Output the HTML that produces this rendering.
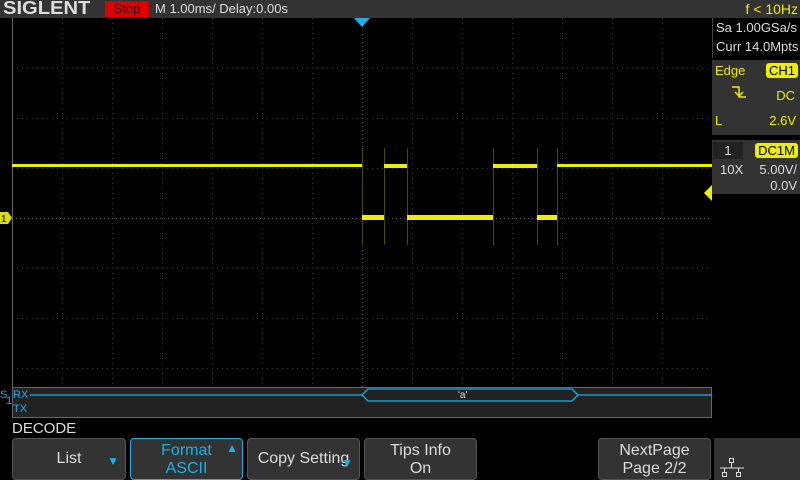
<!DOCTYPE html><html><head><style>
html,body{margin:0;width:800px;height:480px;background:#000;overflow:hidden}
body{font-family:"Liberation Sans",sans-serif;position:relative}
.a{position:absolute}
.btn{position:absolute;top:438px;height:42px;background:#333;border:1px solid #555;border-radius:4px;box-sizing:border-box;color:#ddd;font-size:16px;text-align:center;line-height:18px}
</style></head><body>
<div class="a" style="left:0;top:0;width:800px;height:18px;background:#333"></div>
<div class="a" style="left:3px;top:-2px;color:#ddd;font-weight:bold;font-size:18px;font-family:'Liberation Sans';transform:scaleX(1.12);transform-origin:left">SIGLENT</div>
<div class="a" style="left:105px;top:1px;width:44px;height:16px;background:#d00;color:#300;font-size:13px;text-align:center;line-height:16px">Stop</div>
<div class="a" style="left:155px;top:1px;color:#ddd;font-size:13px;line-height:16px">M 1.00ms/ Delay:0.00s</div>
<div class="a" style="right:2px;top:0;color:#ee0;font-size:14px;line-height:18px">f &lt; 10Hz</div>
<svg class="a" style="left:0;top:0" width="800" height="480">
<g stroke="#3a3a3a" stroke-width="1" stroke-dasharray="1,4">
<path d="M62.5 18V388M112.5 18V388M162.5 18V388M212.5 18V388M262.5 18V388M312.5 18V388M412.5 18V388M462.5 18V388M512.5 18V388M562.5 18V388M612.5 18V388M662.5 18V388"/>
<path d="M12 68.5H712M12 118.5H712M12 168.5H712M12 268.5H712M12 318.5H712M12 368.5H712"/>
</g>
<g stroke="#555" stroke-dasharray="1,3"><path d="M12 218.5H712M362.5 18V388"/></g>
<path d="M12.5 18V418" stroke="#666"/>
<polygon points="354,18 370,18 362,27" fill="#1ab0e8"/>
<polygon points="0,212 8,212 12,218 8,224 0,224" fill="#dd0"/>
<text x="1" y="222" font-size="10" fill="#000" font-family="Liberation Sans">1</text>
<g stroke="#4a4a00" stroke-width="1"><path d="M362.5 148V245M384.5 148V245M407.5 148V245M493.5 148V245M537.5 148V245M557.5 148V245"/></g>
<g fill="#ee0">
<rect x="12" y="164" width="350" height="3"/>
<rect x="362" y="215" width="22" height="5"/>
<rect x="384" y="164" width="23" height="4"/>
<rect x="407" y="215" width="86" height="5"/>
<rect x="493" y="164" width="44" height="4"/>
<rect x="537" y="215" width="20" height="5"/>
<rect x="557" y="164" width="155" height="3"/>
</g>
<rect x="12.5" y="387.5" width="699" height="30" fill="#222" stroke="#666"/>
<g stroke="#1ab0e8" stroke-width="1.3" fill="none">
<path d="M30 395H362M578 395H712"/>
<path d="M362 395L368 389H572L578 395L572 401H368Z"/>
</g>
<text x="458" y="398" font-size="10" fill="#ddd">'a'</text>
<text x="13" y="398" font-size="11" fill="#1ab0e8">RX</text>
<text x="13" y="412" font-size="11" fill="#1ab0e8">TX</text>
<text x="0" y="398" font-size="11" fill="#1ab0e8">S</text>
<text x="6" y="404" font-size="11" fill="#1ab0e8">1</text>
</svg>
<div class="a" style="left:712px;top:18px;width:88px;height:40px;background:#000;border-left:1px solid #444;color:#ddd;font-size:13px;line-height:19px;padding-left:3px;box-sizing:border-box">Sa 1.00GSa/s<br>Curr 14.0Mpts</div>
<div class="a" style="left:712px;top:60px;width:88px;height:75px;background:#333;color:#ee0;font-size:13px">
<div class="a" style="left:3px;top:3px">Edge</div>
<div class="a" style="right:2px;top:3px;background:#ee0;color:#000;padding:0 3px;border-radius:3px">CH1</div>
<div class="a" style="right:5px;top:28px">DC</div>
<svg class="a" style="left:18px;top:24px" width="20" height="16"><path d="M2 3H9V13H16M5 8L9 12L13 8" stroke="#ee0" stroke-width="1.5" fill="none"/></svg>
<div class="a" style="left:3px;top:53px">L</div>
<div class="a" style="right:4px;top:53px">2.6V</div>
</div>
<div class="a" style="left:712px;top:140px;width:88px;height:54px;background:#333;color:#ddd;font-size:13px">
<div class="a" style="left:1px;top:2px;width:30px;height:17px;background:#222;text-align:center;line-height:17px">1</div>
<div class="a" style="right:2px;top:3px;background:#ee0;color:#000;padding:0 3px;border-radius:3px;line-height:15px">DC1M</div>
<div class="a" style="left:8px;top:22px">10X</div>
<div class="a" style="right:3px;top:22px">5.00V/</div>
<div class="a" style="right:3px;top:38px">0.0V</div>
</div>
<svg class="a" style="left:702px;top:185px" width="10" height="16"><polygon points="10,0 10,16 2,8" fill="#ee0"/></svg>
<div class="a" style="left:12px;top:420px;color:#ddd;font-size:15px">DECODE</div>
<div class="btn" style="left:12px;width:114px;line-height:40px">List<span style="position:absolute;right:6px;top:2px;color:#1ab0e8;font-size:12px">▼</span></div>
<div class="btn" style="left:130px;width:113px;border-color:#1ab0e8;color:#1ab0e8;padding-top:3px">Format<br>ASCII<span style="position:absolute;right:4px;top:0px;font-size:12px">▲</span></div>
<div class="btn" style="left:247px;width:113px;line-height:40px">Copy Setting<span style="position:absolute;right:6px;top:4px;color:#1ab0e8;font-size:12px">▼</span></div>
<div class="btn" style="left:364px;width:113px;padding-top:3px">Tips Info<br>On</div>
<div class="btn" style="left:598px;width:113px;padding-top:3px">NextPage<br>Page 2/2</div>
<div class="a" style="left:714px;top:438px;width:86px;height:42px;background:#333"></div>
<svg class="a" style="left:720px;top:458px" width="24" height="20"><g stroke="#ddd" fill="none"><rect x="9.5" y="0.5" width="4" height="4"/><rect x="2.5" y="14.5" width="4" height="4"/><rect x="16.5" y="14.5" width="4" height="4"/><path d="M11.5 5V10M0 10H24M4.5 10V14M18.5 10V14"/></g></svg>
</body></html>
